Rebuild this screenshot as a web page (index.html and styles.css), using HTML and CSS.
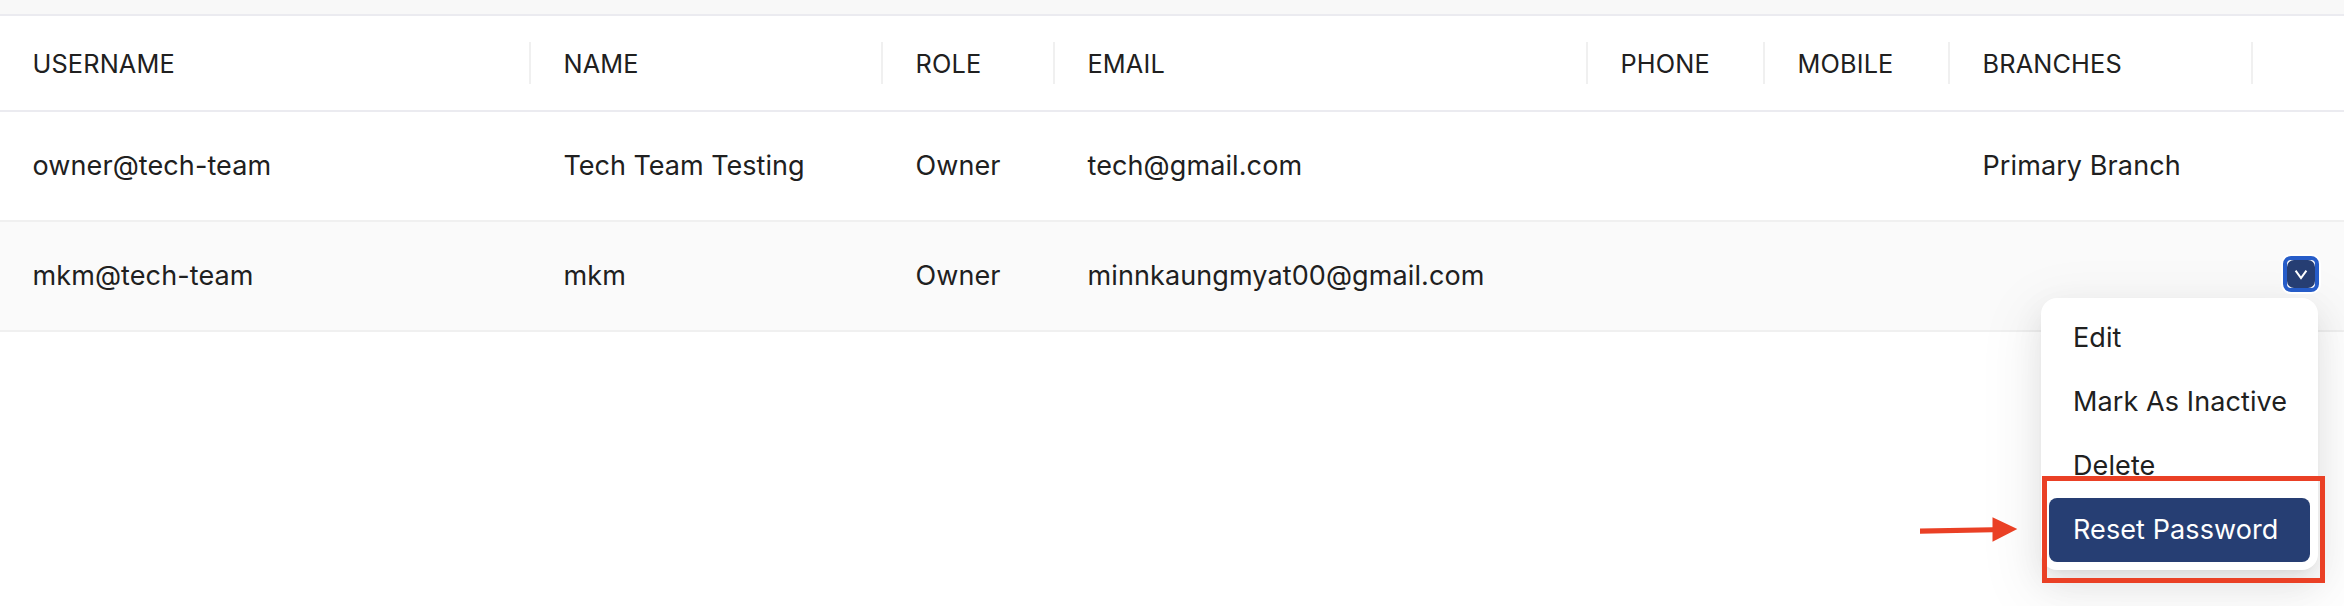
FILE: index.html
```html
<!DOCTYPE html>
<html lang="en">
<head>
<meta charset="utf-8">
<title>Users</title>
<link rel="stylesheet" href="styles.css">
</head>
<body>
<div class="topbar"></div>
<div class="table">
  <div class="row head">
    <div class="cell">USERNAME</div>
    <div class="cell">NAME</div>
    <div class="cell">ROLE</div>
    <div class="cell">EMAIL</div>
    <div class="cell">PHONE</div>
    <div class="cell">MOBILE</div>
    <div class="cell">BRANCHES</div>
    <div class="cell"></div>
  </div>
  <div class="row">
    <div class="cell">owner@tech-team</div>
    <div class="cell name">Tech Team Testing</div>
    <div class="cell">Owner</div>
    <div class="cell">tech@gmail.com</div>
    <div class="cell"></div>
    <div class="cell"></div>
    <div class="cell">Primary Branch</div>
    <div class="cell"></div>
  </div>
  <div class="row hovered">
    <div class="cell">mkm@tech-team</div>
    <div class="cell">mkm</div>
    <div class="cell">Owner</div>
    <div class="cell">minnkaungmyat00@gmail.com</div>
    <div class="cell"></div>
    <div class="cell"></div>
    <div class="cell"></div>
    <div class="cell action"><button class="toggle" aria-label="Actions"><svg width="28" height="28" viewBox="0 0 28 28"><rect width="28" height="28" rx="7" fill="#263e73"/><path d="M8.6 10.6 L14 18 L19.4 10.6" fill="none" stroke="#fff" stroke-width="2"/></svg></button></div>
  </div>
</div>
<div class="menu">
  <div class="item">Edit</div>
  <div class="item">Mark As Inactive</div>
  <div class="item">Delete</div>
  <div class="item active">Reset Password</div>
</div>
<div class="highlight"></div>
<svg class="arrow" width="100" height="28" viewBox="0 0 100 28"><path d="M0 12.5 L72.5 11.2 V1.2 L97.3 13 L72.5 25.8 V16.3 L0 17.8 Z" fill="#ea4025"/></svg>
</body>
</html>
```
FILE: styles.css
```css
* { box-sizing: border-box; }
body {
  margin: 0;
  width: 2344px;
  height: 606px;
  overflow: hidden;
  position: relative;
  background: #fff;
  color: #202020;
  font-family: Inter, "Liberation Sans", sans-serif;
  font-size: 27px;
  letter-spacing: .1px;
}
.topbar { height: 16px; background: #f8f8f8; border-bottom: 2px solid #ebebf0; }
.row {
  display: grid;
  grid-template-columns: 531px 352px 172px 533px 177px 185px 303px 91px;
  height: 110px;
  align-items: center;
  border-bottom: 2px solid #f0f0f0;
}
.cell { padding-left: 32.5px; white-space: nowrap; line-height: 42px; }
.name { letter-spacing: 0; }
.head { height: 96px; font-size: 25.3px; letter-spacing: .15px; border-bottom-color: #ebebf0; }
.head .cell { height: 42px; line-height: 44px; border-right: 2px solid #f0f0f0; }
.head .cell:last-child { border-right: 0; }
.hovered { background: #fafafa; }
.action { padding: 0 25px 4px 0; display: flex; justify-content: flex-end; }
.toggle {
  display: block;
  width: 36px;
  height: 36px;
  padding: 0;
  border: 4px solid #265cc8;
  border-radius: 8px;
  background: #fff;
  box-shadow: 0 0 0 2px #fff;
  position: relative;
  z-index: 2;
}
.toggle svg { display: block; }
.menu {
  position: absolute;
  left: 2041px;
  top: 298px;
  width: 277px;
  padding: 8px;
  border-radius: 16px;
  background: #fff;
  box-shadow: 0 12px 32px rgba(0,0,0,.08), 0 6px 12px -8px rgba(0,0,0,.12), 0 18px 56px 16px rgba(0,0,0,.05);
}
.item { height: 64px; line-height: 64px; padding-left: 24px; white-space: nowrap; border-radius: 8px; }
.active { background: #263e73; color: #fff; }
.highlight { position: absolute; left: 2042px; top: 476px; width: 283px; height: 107px; border: 5px solid #ea4025; }
.arrow { position: absolute; left: 1920px; top: 516px; }
```
